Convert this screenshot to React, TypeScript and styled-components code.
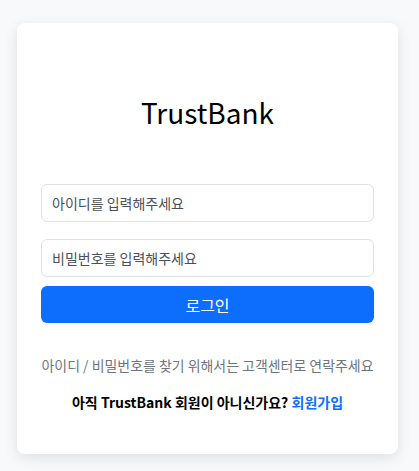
import React from "react";
import styled, { createGlobalStyle } from "styled-components";

const GlobalStyle = createGlobalStyle`
  body {
    margin: 0;
    background: #f8f9fa;
    font-family: "Noto Sans CJK KR", "Noto Sans", sans-serif;
  }
`;

const Page = styled.div`
  padding: 23px 0 18px 17px;
`;

const Card = styled.div`
  width: 381px;
  box-sizing: border-box;
  padding: 71px 24px 41px;
  background: #fff;
  border-radius: 8px;
  box-shadow: 0 4px 14px rgba(0, 0, 0, 0.1);
`;

const Title = styled.h1`
  margin: 0 0 54px;
  font-size: 28px;
  line-height: 36px;
  font-weight: 400;
  text-align: center;
  color: #000;
`;

const Form = styled.form`
  display: flex;
  flex-direction: column;
`;

const Input = styled.input<{ $gap: number }>`
  height: 38px;
  box-sizing: border-box;
  margin-bottom: ${(p) => p.$gap}px;
  padding: 0 10px;
  border: 1px solid #dee2e6;
  border-radius: 6px;
  font-family: inherit;
  font-size: 14px;
  color: #212529;
  outline: none;

  &::placeholder {
    color: #495057;
  }
`;

const Button = styled.button`
  height: 37px;
  border: none;
  border-radius: 6px;
  background: #0d6efd;
  color: #fff;
  font-family: inherit;
  font-size: 16px;
  cursor: pointer;
`;

const Info = styled.p`
  margin: 32px 0 0;
  font-size: 13.95px;
  line-height: 21px;
  color: #6c757d;
  text-align: center;
  white-space: nowrap;
`;

const Signup = styled.p`
  margin: 16px 0 0;
  font-size: 14px;
  line-height: 21px;
  font-weight: 700;
  color: #000;
  text-align: center;
`;

const Link = styled.a`
  color: #0d6efd;
  text-decoration: none;
`;

export default function App() {
  return (
    <Page>
      <GlobalStyle />
      <Card>
        <Title>TrustBank</Title>
        <Form onSubmit={(e) => e.preventDefault()}>
          <Input $gap={17} type="text" placeholder="아이디를 입력해주세요" />
          <Input $gap={9} type="password" placeholder="비밀번호를 입력해주세요" />
          <Button type="submit">로그인</Button>
        </Form>
        <Info>아이디 / 비밀번호를 찾기 위해서는 고객센터로 연락주세요</Info>
        <Signup>
          아직 TrustBank 회원이 아니신가요? <Link href="#">회원가입</Link>
        </Signup>
      </Card>
    </Page>
  );
}
